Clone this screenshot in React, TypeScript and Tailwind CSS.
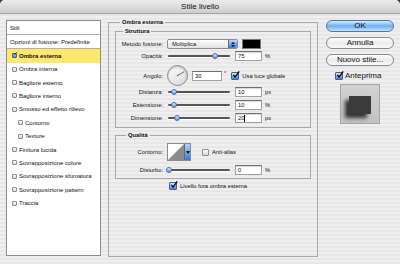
import React from "react";

// Photoshop "Stile livello" dialog, Aqua look

function CheckBox({ on, className }: { on?: boolean; className: string }) {
  return (
    <span
      className={`relative inline-block shrink-0 rounded-[1px] border ${
        on
          ? "border-[#3d5f95] bg-gradient-to-b from-[#d4e6fb] to-[#3f86dc]"
          : "border-[#8c8c8c] bg-gradient-to-b from-white to-[#d6d6d6]"
      } ${className}`}
    >
      {on && (
        <svg viewBox="0 0 10 10" className="absolute -top-[2px] left-0 h-[125%] w-[125%]">
          <path d="M1.8 5.2 L4.2 8.2 L9.6 0.6" fill="none" stroke="#111" strokeWidth="1.9" />
        </svg>
      )}
    </span>
  );
}

function Slider({ pos }: { pos: number }) {
  return (
    <div className="relative ml-[5px] flex h-[8px] w-[62px] items-center">
      <div className="h-[2px] w-full rounded-full bg-[#555] shadow-[0_1px_0_#fff]" />
      <div
        className="absolute top-[1px] -ml-[3px] h-[6px] w-[6px] rounded-full border border-[#4d6e9e] bg-gradient-to-b from-[#e0edfc] to-[#5a95dc]"
        style={{ left: `${pos}%` }}
      />
    </div>
  );
}

function Field({ value, caret }: { value: string; caret?: boolean }) {
  return (
    <div className="ml-[5px] flex h-[10px] w-[27px] items-center border border-[#a0a0a0] border-t-[#6f6f6f] bg-white pl-[2px] shadow-[inset_0_1px_1px_rgba(0,0,0,0.15)]">
      {value}
      {caret && <span className="h-[7px] w-px bg-black" />}
    </div>
  );
}

function Row({ label, className, children }: { label: string; className: string; children: React.ReactNode }) {
  return (
    <div className={`flex items-center ${className}`}>
      <span className="w-[47px] shrink-0 text-right">{label}</span>
      {children}
    </div>
  );
}

function SliderRow({ label, pos, value, unit, caret, className }: {
  label: string; pos: number; value: string; unit: string; caret?: boolean; className: string;
}) {
  return (
    <Row label={label} className={`h-[10px] ${className}`}>
      <Slider pos={pos} />
      <Field value={value} caret={caret} />
      <span className="ml-[3px]">{unit}</span>
    </Row>
  );
}

const styles: { name: string; indent?: boolean }[] = [
  { name: "Ombra interna" },
  { name: "Bagliore esterno" },
  { name: "Bagliore interno" },
  { name: "Smusso ed effetto rilievo" },
  { name: "Contorno", indent: true },
  { name: "Texture", indent: true },
  { name: "Finitura lucida" },
  { name: "Sovrapposizione colore" },
  { name: "Sovrapposizione sfumatura" },
  { name: "Sovrapposizione pattern" },
  { name: "Traccia" },
];

function AquaButton({ label, blue }: { label: string; blue?: boolean }) {
  return (
    <div
      className={`flex h-[12px] w-full items-center justify-center rounded-full border text-[8px] leading-[10px] ${
        blue
          ? "border-[#4f76ad] bg-gradient-to-b from-[#d6ebff] via-[#6cb0f2] to-[#bfe2ff]"
          : "border-[#8a8a8a] bg-gradient-to-b from-white via-[#ececec] to-[#fafafa]"
      }`}
    >
      {label}
    </div>
  );
}

export default function App() {
  return (
    <div className="h-[264px] w-[400px] overflow-hidden bg-[#3a3a3a] font-['Liberation_Sans',Arial,Helvetica,sans-serif] text-[5.8px] leading-[8px] text-[#111]">
      <div className="h-full w-full rounded-t-[5px] bg-[repeating-linear-gradient(180deg,#efefef_0px,#efefef_2px,#e7e7e7_2px,#e7e7e7_4px)]">
        {/* Title bar */}
        <div className="flex h-[14px] items-center justify-center rounded-t-[5px] border-b border-[#a3a3a3] bg-gradient-to-b from-[#ececec] to-[#cdcdcd] text-[8px]">
          Stile livello
        </div>

        <div className="flex pl-[6px] pt-[4px]">
          {/* Styles list */}
          <div className="mt-[2px] flex h-[236px] w-[95px] flex-col border border-[#8e8e8e] bg-white text-[6px]">
            <div className="flex h-[14px] items-center border-b border-[#b0b0b0] pl-[3px]">Stili</div>
            <div className="flex h-[14px] items-center border-b border-[#b0b0b0] pl-[3px]">
              Opzioni di fusione: Predefinite
            </div>
            <div className="flex h-[13.5px] items-center bg-[#fbe86c] pl-[5px] font-bold">
              <CheckBox on className="h-[5px] w-[5px]" />
              <span className="ml-[2px]">Ombra esterna</span>
            </div>
            {styles.map((s) => (
              <div
                key={s.name}
                className={`flex h-[13.4px] items-center ${s.indent ? "pl-[11px]" : "pl-[5px]"}`}
              >
                <CheckBox className="h-[5px] w-[5px]" />
                <span className="ml-[2px]">{s.name}</span>
              </div>
            ))}
          </div>

          {/* Main panel */}
          <fieldset className="ml-[7px] h-[239px] w-[210px] border border-[#a9a9a9] px-[6px]">
            <legend className="ml-[5px] px-[2px] font-bold leading-[8px]">Ombra esterna</legend>

            <fieldset className="mt-[1px] border border-[#a9a9a9] pb-[4px] pt-[4px]">
              <legend className="ml-[7px] px-[2px] font-bold leading-[8px]">Struttura</legend>

              <Row label="Metodo fusione:" className="h-[10px]">
                <div className="ml-[4px] flex h-[10px] w-[71px] items-stretch rounded-[2px] border border-[#8d8d8d] bg-gradient-to-b from-white to-[#e2e2e2]">
                  <span className="flex flex-1 items-center pl-[4px]">Moltiplica</span>
                  <span className="flex w-[9px] flex-col items-center justify-center gap-[1px] rounded-r-[2px] border-l border-[#4a6fa5] bg-gradient-to-b from-[#b6d6f8] to-[#2f7ae0]">
                    <svg viewBox="0 0 4 2" className="h-[2px] w-[4px]"><path d="M0 2 L2 0 L4 2 Z" fill="#111" /></svg>
                    <svg viewBox="0 0 4 2" className="h-[2px] w-[4px]"><path d="M0 0 L2 2 L4 0 Z" fill="#111" /></svg>
                  </span>
                </div>
                <div className="ml-[4px] h-[10px] w-[19px] border border-[#777] bg-black" />
              </Row>

              <SliderRow label="Opacità:" pos={75} value="75" unit="%" className="mt-[2px]" />

              <Row label="Angolo:" className="mt-[4px] h-[21px]">
                <div className="relative ml-[4px] h-[21px] w-[21px] shrink-0 rounded-full border border-[#8a8a8a] bg-gradient-to-br from-white to-[#d8d8d8] shadow-[inset_0_1px_2px_rgba(0,0,0,0.25)]">
                  <svg viewBox="0 0 19 19" className="absolute inset-0 h-full w-full">
                    <line x1="9.5" y1="9.5" x2="16.3" y2="5.6" stroke="#555" strokeWidth="0.8" />
                    <circle cx="9.5" cy="9.5" r="0.8" fill="#666" />
                  </svg>
                </div>
                <div className="ml-[4px] flex h-[10px] w-[30px] items-center border border-[#a0a0a0] border-t-[#6f6f6f] bg-white pl-[2px]">
                  30
                </div>
                <span className="ml-[2px] self-start pt-[4px]">°</span>
                <CheckBox on className="ml-[5px] h-[8px] w-[8px]" />
                <span className="ml-[3px]">Usa luce globale</span>
              </Row>

              <SliderRow label="Distanza:" pos={10} value="10" unit="px" className="mt-[1px]" />
              <SliderRow label="Estensione:" pos={10} value="10" unit="%" className="mt-[3px]" />
              <SliderRow label="Dimensione:" pos={15} value="20" unit="px" caret className="mt-[3px]" />
            </fieldset>

            <fieldset className="mt-[3px] border border-[#a9a9a9] pb-[3px] pt-[4px]">
              <legend className="ml-[10px] px-[2px] font-bold leading-[8px]">Qualità</legend>

              <Row label="Contorno:" className="h-[18px]">
                <div className="ml-[4px] flex h-[18px] w-[24px] border border-[#8a8a8a] bg-white">
                  <svg viewBox="0 0 16 16" className="h-full w-[16px]">
                    <polygon points="0,16 16,0 16,16" fill="#8c8c8c" />
                  </svg>
                  <span className="flex flex-1 items-center justify-center border-l border-[#4a6fa5] bg-gradient-to-b from-[#b6d6f8] to-[#2f7ae0]">
                    <svg viewBox="0 0 4 3" className="h-[3px] w-[4px]"><path d="M0 0 L2 3 L4 0 Z" fill="#111" /></svg>
                  </span>
                </div>
                <CheckBox className="ml-[11px] h-[7px] w-[7px]" />
                <span className="ml-[3px]">Anti-alias</span>
              </Row>

              <SliderRow label="Disturbo:" pos={2} value="0" unit="%" className="mt-[4px]" />
            </fieldset>

            <div className="mt-[3px] flex h-[8px] items-center pl-[54px]">
              <CheckBox on className="h-[8px] w-[8px]" />
              <span className="ml-[3px]">Livello fora ombra esterna</span>
            </div>
          </fieldset>

          {/* Buttons */}
          <div className="ml-[8px] mt-[2px] flex w-[68px] flex-col">
            <AquaButton label="OK" blue />
            <div className="mt-[5px]"><AquaButton label="Annulla" /></div>
            <div className="mt-[5px]"><AquaButton label="Nuovo stile..." /></div>
            <div className="mt-[4px] flex h-[11px] items-center pl-[9px] text-[8px]">
              <CheckBox on className="h-[8px] w-[8px]" />
              <span className="ml-[2px]">Anteprima</span>
            </div>
            <div className="ml-[14px] mt-[3px] h-[40px] w-[40px] border border-[#a5a5a5] bg-gradient-to-b from-[#d2d2d2] to-[#c2c2c2] pl-[8px] pt-[11px]">
              <div className="h-[18px] w-[22px] bg-[#3b3b3b] shadow-[-4px_4px_4px_rgba(0,0,0,0.75)]" />
            </div>
          </div>
        </div>
      </div>
    </div>
  );
}
